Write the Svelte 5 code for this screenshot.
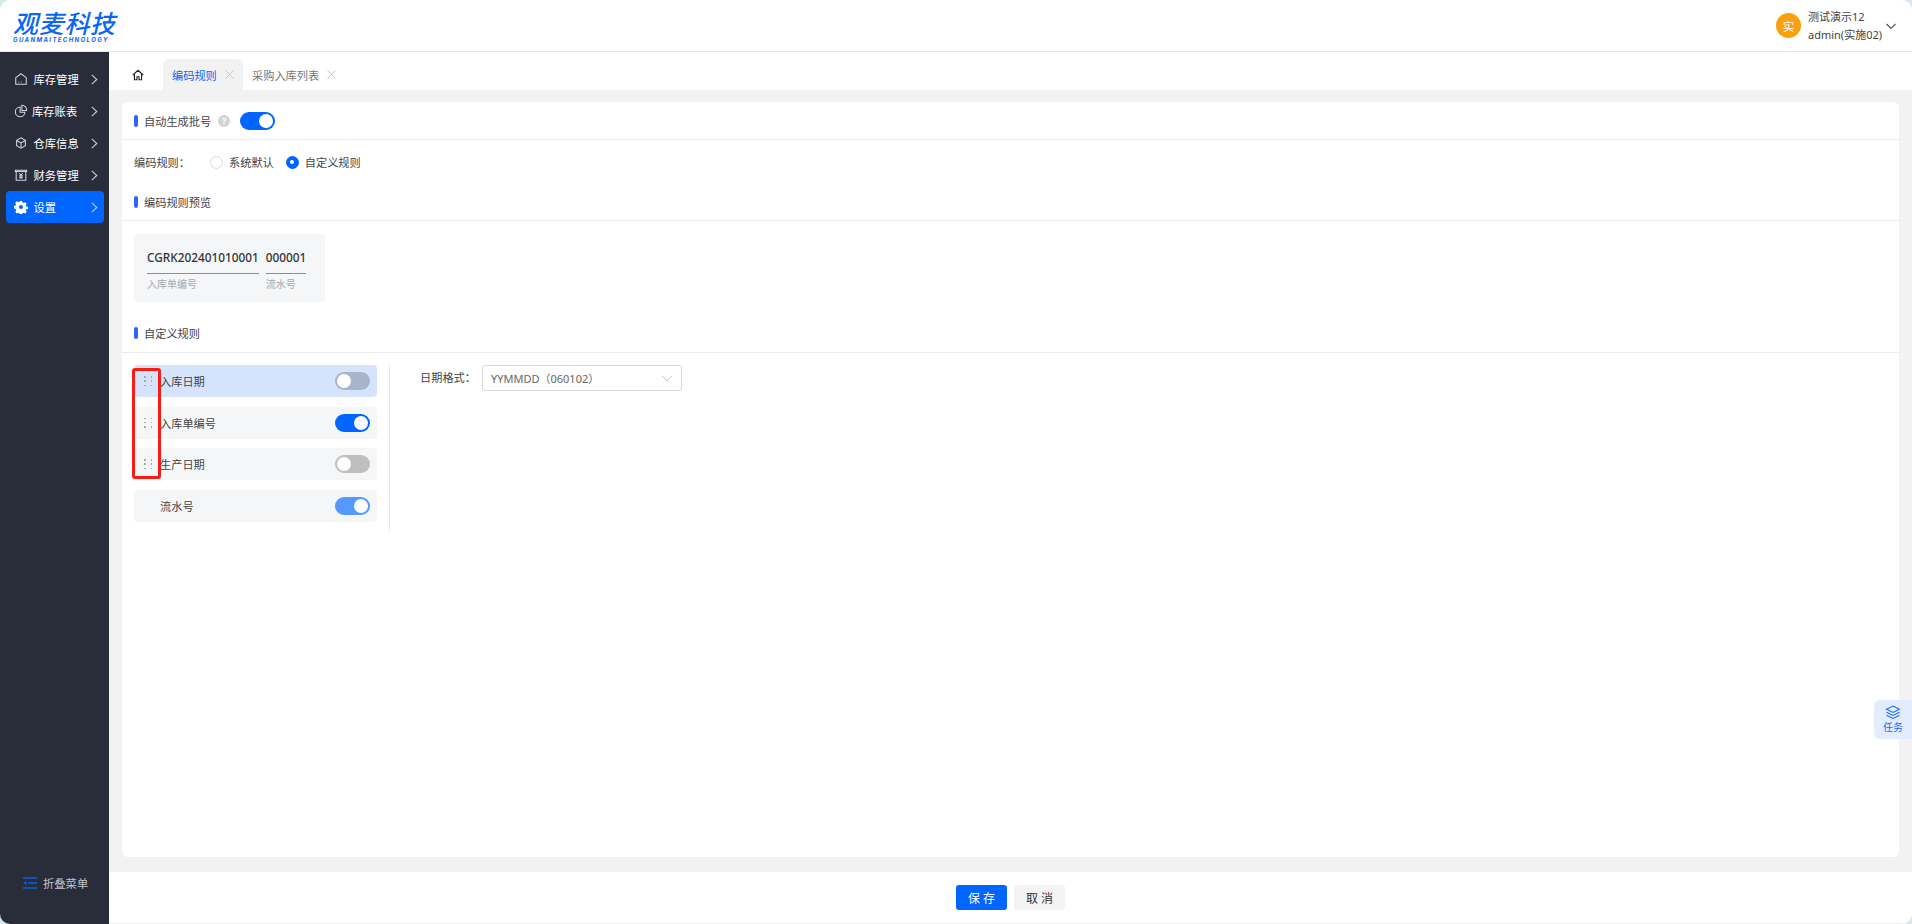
<script>
  const menu = [
    { label: '库存管理', icon: 'home' },
    { label: '库存账表', icon: 'pie', tight: true },
    { label: '仓库信息', icon: 'box' },
    { label: '财务管理', icon: 'money' },
    { label: '设置', icon: 'gear', active: true }
  ];
  const rules = [
    { label: '入库日期', on: false, drag: true, sel: true },
    { label: '入库单编号', on: true, drag: true },
    { label: '生产日期', on: false, drag: true },
    { label: '流水号', on: true, fixed: true }
  ];
</script>

<div class="page">
  <header class="top">
    <div class="logo">
      <div class="logo-cn">观麦科技</div>
      <div class="logo-en">GUANMAITECHNOLOGY</div>
    </div>
    <div class="user">
      <div class="avatar">实</div>
      <div class="names"><div>测试演示12</div><div>admin(实施02)</div></div>
      <svg class="chev" width="12" height="12" viewBox="0 0 12 12"><path d="M1.5 4l4.5 4.5L10.500 4" fill="none" stroke="#555" stroke-width="1.1"/></svg>
    </div>
  </header>
  <div class="body">
    <aside class="side">
      <nav class="nav">
        {#each menu as m}
          <div class="item" class:active={m.active}>
            <svg class="mi" width="14" height="14" viewBox="0 0 16 16" fill="none" stroke="currentColor" stroke-width="1.2">
              {#if m.icon === 'home'}
                <path d="M2 6.500L8 2l6 4.500V14H2z"/><path d="M5 11.500h1M8 11.500h.8"/>
              {:else if m.icon === 'pie'}
                <path d="M7 3.500a5.500 5.500 0 1 0 5.500 6H7z"/><path d="M9 1.500a5.500 5.500 0 0 1 5.500 6H9z" fill="#292d3a"/>
              {:else if m.icon === 'box'}
                <path d="M8 2l5 3v6l-5 3-5-3V5z"/><path d="M3.500 5.500L8 8l4.500-2.500M8 8v5"/>
              {:else if m.icon === 'money'}
                <path d="M1.500 2.500h13v1.500H1.500zM2.500 4h11v10h-11z"/><path d="M6 6l2 2 2-2M8 8v4M6 9h4M6 11h4"/>
              {:else}
                <path fill="#fff" stroke="none" fill-rule="evenodd" d="M6.700 1h2.600l.4 1.900 1.300.6 1.700-1 1.800 1.900-1 1.600.5 1.300 1.900.4v2.600l-1.900.4-.5 1.300 1 1.700-1.800 1.800-1.700-1-1.300.5-.4 1.900H6.700l-.4-1.900-1.300-.5-1.700 1-1.800-1.800 1-1.700-.5-1.300L0 9.300V6.700l1.900-.4.500-1.300-1-1.600 1.800-1.900 1.700 1 1.300-.6zM8 5.700a2.300 2.300 0 1 0 0 4.600 2.300 2.300 0 0 0 0-4.600z"/>
              {/if}
            </svg>
            <span class="lbl" class:tight={m.tight}>{m.label}</span>
            <svg class="arr" width="7" height="11" viewBox="0 0 7 11"><path d="M.8.800l5 4.700-5 4.700" fill="none" stroke="#c9cbd0" stroke-width="1.1"/></svg>
          </div>
        {/each}
      </nav>
      <div class="collapse">
        <svg width="14" height="12" viewBox="0 0 14 12"><path d="M0 1h14M5 6h9M0 11h14" stroke="#0a5fe0" stroke-width="1.500"/><path d="M0.500 6L3.500 3.800v4.400z" fill="#0a5fe0"/></svg>
        <span>折叠菜单</span>
      </div>
    </aside>
    <main class="main">
      <div class="tabs">
        <div class="tab-home">
          <svg width="12" height="12" viewBox="0 0 14 14" fill="none" stroke="#222" stroke-width="1.300"><path d="M1 7l6-5.500L13 7M2.800 6v6.500h3v-3.500h2.400v3.500h3V6"/></svg>
        </div>
        <div class="tab cur"><span>编码规则</span><svg width="9" height="9" viewBox="0 0 10 10"><path d="M.5.500l9 9M9.500.500l-9 9" stroke="#c4c4c4"/></svg></div>
        <div class="tab"><span>采购入库列表</span><svg width="9" height="9" viewBox="0 0 10 10"><path d="M.5.500l9 9M9.500.500l-9 9" stroke="#c4c4c4"/></svg></div>
      </div>
      <div class="content">
        <section class="card">
          <div class="sec first">
            <i class="bar"></i><span>自动生成批号</span>
            <span class="help">?</span>
            <span class="sw on big"><b></b></span>
          </div>
          <div class="radios">
            <span class="rlabel">编码规则：</span>
            <span class="radio"></span><span class="rtext">系统默认</span>
            <span class="radio checked"></span><span class="rtext">自定义规则</span>
          </div>
          <div class="sec second"><i class="bar"></i><span>编码规则预览</span></div>
          <div class="preview">
            <div class="pv"><div class="code">CGRK202401010001</div><div class="cap">入库单编号</div></div>
            <div class="pv"><div class="code">000001</div><div class="cap">流水号</div></div>
          </div>
          <div class="sec third"><i class="bar"></i><span>自定义规则</span></div>
          <div class="rules">
            <div class="list">
              {#each rules as r}
                <div class="row" class:sel={r.sel} class:fixed={r.fixed}>
                  <span class="dots">{#if r.drag}{#each Array(6) as _}<i></i>{/each}{/if}</span>
                  <span class="rname">{r.label}</span>
                  <span class="sw" class:on={r.on} class:fixed={r.fixed} class:blue={r.sel}><b></b></span>
                </div>
              {/each}
              <div class="redbox"></div>
            </div>
            <div class="detail">
              <span class="dlabel">日期格式：</span>
              <div class="select">
                <span>YYMMDD（060102）</span>
                <svg width="12" height="12" viewBox="0 0 12 12"><path d="M1 4l5 5 5-5" fill="none" stroke="#c8c8c8"/></svg>
              </div>
            </div>
          </div>
        </section>
        <div class="task">
          <svg width="16" height="15" viewBox="0 0 16 15" fill="none" stroke="#1a6cf5" stroke-width="1.100"><path d="M8 1l6.500 3.300L8 7.500 1.500 4.300z"/><path d="M1.500 7.200L8 10.500l6.500-3.300M1.500 10.200L8 13.500l6.500-3.300"/></svg>
          <span>任务</span>
        </div>
      </div>
      <footer class="foot">
        <button class="btn primary">保 存</button>
        <button class="btn">取 消</button>
      </footer>
    </main>
  </div>
</div>

<style>
  :global(body) { margin: 0; background: #d5e8ea; font-family: "Noto Sans", "Noto Sans CJK SC", sans-serif; }
  .page { width: 1912px; height: 924px; display: flex; flex-direction: column; background: #fff; border-radius: 10px; overflow: hidden; font-size: 11.2px; color: #333; }
  .top { height: 51px; flex: none; border-bottom: 1px solid #e8e8e8; display: flex; justify-content: space-between; align-items: center; padding: 0 15px 0 13px; }
  .logo { color: #0b66f0; display: flex; flex-direction: column; gap: 1px; margin-top: 2px; }
  .logo-cn { font: italic 500 25px/25px "Noto Sans CJK SC", sans-serif; letter-spacing: .7px; }
  .logo-en { font: italic 700 6px/7px Inter, sans-serif; letter-spacing: 1.4px; }
  .user { display: flex; align-items: center; }
  .avatar { width: 25px; height: 25px; border-radius: 50%; background: #f9a00e; color: #fff; display: flex; align-items: center; justify-content: center; font-size: 11.5px; }
  .names { margin-left: 7px; line-height: 18px; font-size: 11px; color: #444; width: 77px; white-space: nowrap; }
  .body { flex: 1; display: flex; min-height: 0; }
  .side { width: 109px; flex: none; background: #292d3a; display: flex; flex-direction: column; justify-content: space-between; color: #fff; }
  .nav { padding: 11px 5px 0 6px; display: flex; flex-direction: column; }
  .item { height: 32px; display: flex; align-items: center; padding: 0 6px 0 8px; border-radius: 4px; color: #d4d5d8; }
  .item.active { background: #0066ff; color: #fff; }
  .lbl { margin-left: 5.5px; flex: 1; color: #fff; font-size: 11.3px; }
  .lbl.tight { margin-left: 4px; }
  .collapse { display: flex; align-items: center; gap: 6px; padding: 0 0 33px 23px; color: #c2c4c8; font-size: 11.3px; }
  .main { flex: 1; min-width: 0; display: flex; flex-direction: column; }
  .tabs { height: 38px; flex: none; display: flex; align-items: flex-end; }
  .tab-home { width: 54px; height: 31px; box-sizing: border-box; padding-left: 3px; display: flex; align-items: center; justify-content: center; }
  .tab { height: 31px; display: flex; align-items: center; gap: 8px; padding: 0 9px; color: #777; border-radius: 6px 6px 0 0; background: #fff; white-space: nowrap; }
  .tab.cur { background: #f2f2f2; color: #0b66f0; width: 80px; box-sizing: border-box; }
  .content { flex: 1; min-height: 0; background: #f2f2f2; padding: 12px 13px 15px 13px; position: relative; }
  .card { background: #fff; border-radius: 6px; height: 100%; box-sizing: border-box; }
  .sec { display: flex; align-items: center; padding-left: 12px; border-bottom: 1px solid #ececec; color: #444; }
  .sec.first { height: 37px; }
  .sec.second { height: 36px; }
  .sec.third { height: 38px; margin-top: 12px; }
  .bar { width: 4px; height: 12px; border-radius: 2px; background: #2f66f6; margin-right: 6px; flex: none; }
  .help { width: 12px; height: 12px; border-radius: 50%; background: #d4d4d4; color: #fff; font-size: 9px; line-height: 12px; text-align: center; margin-left: 7px; font-weight: 700; }
  .sw { position: relative; display: block; width: 35px; height: 18px; border-radius: 9px; background: #bfbfbf; flex: none; }
  .sw.big { margin-left: 10px; }
  .sw b { position: absolute; left: 2px; top: 2px; width: 14px; height: 14px; border-radius: 50%; background: #fff; }
  .sw.on { background: #0066ff; }
  .sw.on b { left: 19px; }
  .sw.blue { background: #a7b4ca; }
  .sw.fixed { background: #5598ff; }
  .radios { height: 44px; display: flex; align-items: center; padding-left: 12px; color: #444; }
  .rlabel { width: 76px; }
  .radio { width: 13px; height: 13px; border: 1px solid #d9d9d9; border-radius: 50%; box-sizing: border-box; margin-right: 6px; flex: none; position: relative; background: #fff; }
  .radio.checked { border-color: #0066ff; background: #0066ff; }
  .radio.checked::after { content: ""; position: absolute; left: 3.500px; top: 3.500px; width: 4px; height: 4px; border-radius: 50%; background: #fff; }
  .rtext { margin-right: 12px; color: #444; }
  .preview { margin: 13px 0 0 12px; width: 191px; height: 68px; box-sizing: border-box; background: #f5f6f8; border-radius: 4px; padding: 13px 13px 0; display: flex; gap: 7px; }
  .code { font-size: 11.8px; line-height: 20px; font-weight: 500; color: #333; border-bottom: 1px solid #3fb68e; padding-bottom: 6px; white-space: nowrap; }
  .cap { font-size: 10px; line-height: 14px; color: #a5a8ad; margin-top: 3px; }
  .rules { display: flex; padding: 12px 0 0 12px; }
  .list { position: relative; width: 243px; display: flex; flex-direction: column; gap: 9.500px; padding-right: 12px; border-right: 1px solid #e8e8e8; height: 166px; }
  .row { height: 32px; background: #f5f6f8; border-radius: 4px; display: flex; align-items: center; padding: 0 7px 0 10px; }
  .row.sel { background: #d5e3fd; }
  .dots { width: 8px; height: 10px; display: grid; grid-template-columns: 1.500px 1.500px; grid-template-rows: repeat(3, 1.500px); justify-content: space-between; align-content: space-between; flex: none; }
  .dots i { background: #a3a8b3; display: block; }
  .rname { margin-left: 8px; flex: 1; color: #444; }
  .redbox { position: absolute; left: -2px; top: 3px; width: 29px; height: 111px; box-sizing: border-box; border: 3px solid #f81d12; border-radius: 3px; pointer-events: none; }
  .detail { display: flex; align-items: flex-start; margin-left: 30px; }
  .dlabel { width: 62px; line-height: 26px; color: #444; }
  .select { width: 200px; height: 26px; box-sizing: border-box; border: 1px solid #d9d9d9; border-radius: 3px; display: flex; align-items: center; justify-content: space-between; padding: 0 8px; color: #666; font-size: 11px; }
  .task { position: absolute; right: 0; top: 610px; width: 38px; height: 39px; background: #e3ecfd; border-radius: 6px 0 0 6px; display: flex; flex-direction: column; align-items: center; justify-content: center; color: #1a6cf5; font-size: 10px; line-height: 13px; gap: 1px; }
  .foot { height: 52px; flex: none; border-bottom: 1px solid #eee; display: flex; align-items: center; justify-content: center; gap: 7px; box-sizing: border-box; }
  .btn { width: 51px; height: 25px; border: 0; border-radius: 3px; background: #f3f3f3; color: #333; font: 12px "Noto Sans", "Noto Sans CJK SC", sans-serif; padding: 0; }
  .btn.primary { background: #0066ff; color: #fff; }
</style>
